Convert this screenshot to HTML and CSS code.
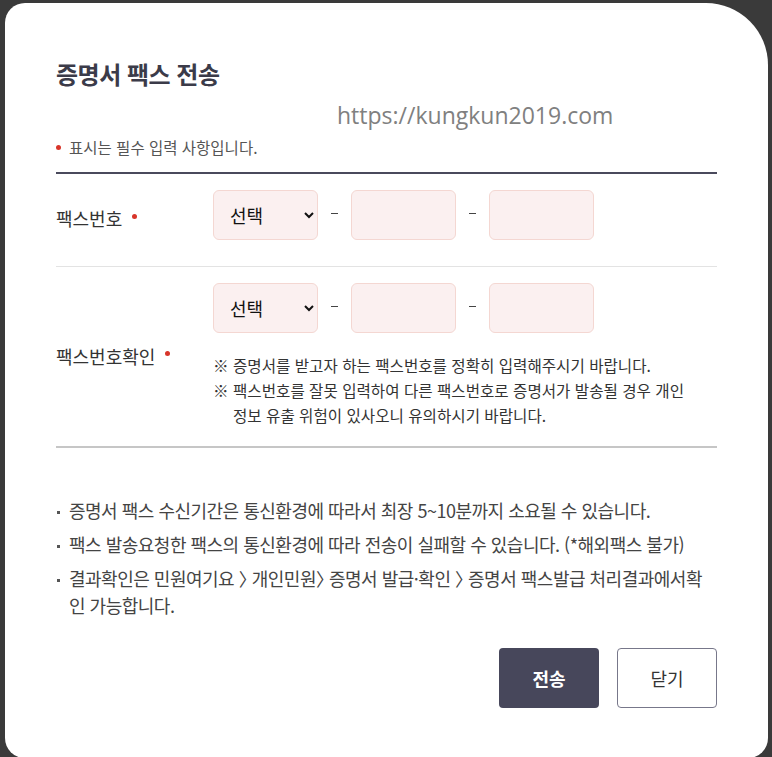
FILE: index.html
```html
<!DOCTYPE html>
<html lang="ko">
<head>
<meta charset="utf-8">
<title>증명서 팩스 전송</title>
<link rel="stylesheet" href="styles.css">
</head>
<body>
<div class="modal">
  <h1 class="title">증명서 팩스 전송</h1>
  <div class="watermark">https://kungkun2019.com</div>
  <p class="req-note"><span class="dot"></span>표시는 필수 입력 사항입니다.</p>
  <div class="form">
    <div class="row row-first">
      <div class="label">팩스번호<span class="dot"></span></div>
      <div class="fields">
        <div class="phone">
          <select class="sel"><option>선택</option></select>
          <span class="dash"></span>
          <input class="inp" type="text">
          <span class="dash"></span>
          <input class="inp" type="text">
        </div>
      </div>
    </div>
    <div class="row row-second">
      <div class="label">팩스번호확인<span class="dot"></span></div>
      <div class="fields">
        <div class="phone">
          <select class="sel"><option>선택</option></select>
          <span class="dash"></span>
          <input class="inp" type="text">
          <span class="dash"></span>
          <input class="inp" type="text">
        </div>
        <ul class="warn">
          <li><span class="mark">※</span><span>증명서를 받고자 하는 팩스번호를 정확히 입력해주시기 바랍니다.</span></li>
          <li><span class="mark">※</span><span>팩스번호를 잘못 입력하여 다른 팩스번호로 증명서가 발송될 경우 개인 정보 유출 위험이 있사오니 유의하시기 바랍니다.</span></li>
        </ul>
      </div>
    </div>
  </div>
  <ul class="info">
    <li>증명서 팩스 수신기간은 통신환경에 따라서 최장 5~10분까지 소요될 수 있습니다.</li>
    <li>팩스 발송요청한 팩스의 통신환경에 따라 전송이 실패할 수 있습니다. (*해외팩스 불가)</li>
    <li>결과확인은 민원여기요 〉 개인민원〉 증명서 발급·확인 〉 증명서 팩스발급 처리결과에서확인 가능합니다.</li>
  </ul>
  <div class="buttons">
    <button class="btn btn-primary" type="button">전송</button>
    <button class="btn btn-secondary" type="button">닫기</button>
  </div>
</div>
</body>
</html>
```

FILE: styles.css
```css
html {
  background: #3a3a3a;
}
body {
  margin: 0;
  font-family: "Noto Sans CJK KR", "Noto Sans", sans-serif;
  color: #333;
}
.modal {
  box-sizing: border-box;
  margin: 3px 4px 0 5px;
  height: 755px;
  background: #fff;
  border-radius: 20px 62px 20px 20px;
  padding: 50px 51px 0 51px;
}
.title {
  margin: 0;
  font-size: 24px;
  line-height: 42px;
  font-weight: 700;
  color: #3b3b49;
  letter-spacing: -0.5px;
}
.watermark {
  font-family: "Open Sans", sans-serif;
  font-size: 23px;
  line-height: 32px;
  color: #808080;
  padding-left: 281px;
  margin-top: 4px;
}
.req-note {
  margin: 4px 0 0;
  font-size: 15.5px;
  line-height: 24px;
  color: #555;
  display: flex;
  align-items: center;
}
.dot {
  display: inline-block;
  width: 5px;
  height: 5px;
  border-radius: 50%;
  background: #d8352a;
}
.req-note .dot {
  margin: 0 8px 0 0;
}
.form {
  margin-top: 13px;
  border-top: 2px solid #4a4a5c;
  border-bottom: 2px solid #c6c6c6;
}
.row {
  display: flex;
  align-items: center;
}
.row-first {
  padding: 16px 0 26px;
  border-bottom: 1px solid #e3e3e3;
}
.row-first .label {
  padding-top: 6px;
}
.row-second {
  padding: 16px 0 18px;
}
.label {
  width: 157px;
  flex: none;
  font-size: 18px;
  color: #333;
  display: flex;
  align-items: center;
}
.label .dot {
  margin: -4px 0 0 10px;
}
.phone {
  display: flex;
  align-items: center;
}
.sel, .inp {
  box-sizing: border-box;
  width: 105px;
  height: 50px;
  background: #fbf0f0;
  border: 1px solid #f4d7d2;
  border-radius: 6px;
  font-family: "Noto Sans CJK KR", sans-serif;
  font-size: 18px;
  color: #111;
  outline: none;
}
.sel {
  padding: 0 6px 0 12px;
}
.dash {
  width: 33px;
  display: flex;
  justify-content: center;
  margin-top: -3px;
}
.dash::before {
  content: "";
  width: 7px;
  height: 1px;
  background: #444;
}
.warn {
  list-style: none;
  margin: 20px 0 0;
  padding: 0;
  font-size: 15.6px;
  line-height: 25px;
  color: #333;
  width: 485px;
}
.warn li {
  display: flex;
}
.warn .mark {
  width: 20px;
  flex: none;
}
.info {
  list-style: none;
  margin: 49px 0 0;
  padding: 0;
  font-size: 18px;
  line-height: 27px;
  color: #444;
  letter-spacing: -0.5px;
  font-feature-settings: "halt" 1;
}
.info li {
  position: relative;
  padding-left: 13px;
  margin-bottom: 7px;
}
.info li::before {
  content: "";
  position: absolute;
  left: 1px;
  top: 14px;
  width: 3px;
  height: 3px;
  background: #555;
}
.buttons {
  display: flex;
  justify-content: flex-end;
  gap: 18px;
  margin-top: 29px;
}
.btn {
  width: 100px;
  height: 60px;
  border-radius: 4px;
  font-family: "Noto Sans CJK KR", sans-serif;
  font-size: 18px;
  cursor: pointer;
}
.btn-primary {
  background: #47475b;
  border: none;
  color: #fff;
  font-weight: 700;
}
.btn-secondary {
  background: #fff;
  border: 1px solid #77778a;
  color: #333;
}
```
